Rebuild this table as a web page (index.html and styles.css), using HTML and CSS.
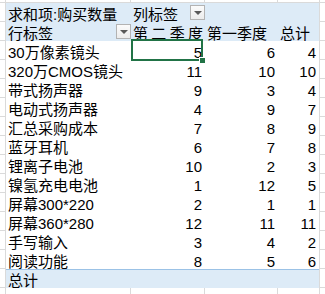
FILE: index.html
```html
<!DOCTYPE html>
<html lang="zh">
<head>
<meta charset="utf-8">
<title>数据透视表</title>
<link rel="stylesheet" href="styles.css">
</head>
<body>
<div class="sheet">
  <div class="pivot">
    <div class="cell hdr">求和项:购买数量</div>
    <div class="cell hdr with-btn">列标签<span class="dd"></span></div>
    <div class="cell hdr"></div>
    <div class="cell hdr"></div>

    <div class="cell hdr with-btn">行标签<span class="dd"></span></div>
    <div class="cell hdr spread">第二季度</div>
    <div class="cell hdr">第一季度</div>
    <div class="cell hdr">总计</div>

    <div class="cell lbl">30万像素镜头</div><div class="cell num">5</div><div class="cell num">6</div><div class="cell num">4</div>
    <div class="cell lbl">320万CMOS镜头</div><div class="cell num">11</div><div class="cell num">10</div><div class="cell num">10</div>
    <div class="cell lbl">带式扬声器</div><div class="cell num">9</div><div class="cell num">3</div><div class="cell num">4</div>
    <div class="cell lbl">电动式扬声器</div><div class="cell num">4</div><div class="cell num">9</div><div class="cell num">7</div>
    <div class="cell lbl">汇总采购成本</div><div class="cell num">7</div><div class="cell num">8</div><div class="cell num">9</div>
    <div class="cell lbl">蓝牙耳机</div><div class="cell num">6</div><div class="cell num">7</div><div class="cell num">8</div>
    <div class="cell lbl">锂离子电池</div><div class="cell num">10</div><div class="cell num">2</div><div class="cell num">3</div>
    <div class="cell lbl">镍氢充电电池</div><div class="cell num">1</div><div class="cell num">12</div><div class="cell num">5</div>
    <div class="cell lbl">屏幕300*220</div><div class="cell num">2</div><div class="cell num">1</div><div class="cell num">1</div>
    <div class="cell lbl">屏幕360*280</div><div class="cell num">12</div><div class="cell num">11</div><div class="cell num">11</div>
    <div class="cell lbl">手写输入</div><div class="cell num">3</div><div class="cell num">4</div><div class="cell num">2</div>
    <div class="cell lbl">阅读功能</div><div class="cell num">8</div><div class="cell num">5</div><div class="cell num">6</div>

    <div class="cell tot">总计</div><div class="cell tot"></div><div class="cell tot"></div><div class="cell tot"></div>

    <div class="sel"><span class="handle"></span></div>
  </div>
</div>
</body>
</html>
```

FILE: styles.css
```css
html, body {
  margin: 0;
  padding: 0;
}

body {
  width: 325px;
  height: 294px;
  overflow: hidden;
  background-color: #ffffff;
  background-image:
    linear-gradient(#dadada, #dadada),
    linear-gradient(#dadada, #dadada),
    linear-gradient(#dadada, #dadada),
    linear-gradient(#dadada, #dadada),
    linear-gradient(#dadada, #dadada),
    repeating-linear-gradient(to bottom, #dadada 0 1px, transparent 1px 19px);
  background-size: 1px 100%, 1px 100%, 1px 100%, 1px 100%, 1px 100%, 100% 100%;
  background-position: 5px 0, 130px 0, 204px 0, 277px 0, 319px 0, 0 2px;
  background-repeat: no-repeat, no-repeat, no-repeat, no-repeat, no-repeat, repeat;
  font-family: "Liberation Sans", "Noto Sans CJK SC", sans-serif;
  font-size: 15px;
  color: #000;
}

.sheet {
  padding: 3px 0 0 6px;
}

.pivot {
  position: relative;
  width: 313px;
  display: grid;
  grid-template-columns: 125px 74px 73px 41px;
  grid-auto-rows: 19px;
  background: #ffffff;
}

.cell {
  line-height: 17px;
  height: 19px;
  white-space: nowrap;
  padding: 3px 2px 0;
  box-sizing: border-box;
}

.hdr {
  background: #ddebf7;
}

.spread {
  white-space: normal;
  text-align: justify;
  text-align-last: justify;
  text-justify: inter-character;
  padding-right: 2px;
}

.with-btn {
  position: relative;
}

.dd {
  position: absolute;
  right: 0;
  bottom: 2px;
  width: 13px;
  height: 13px;
  border: 1px solid #b3b3b3;
  background: linear-gradient(#fbfbfb, #ececec);
}

.dd::after {
  content: "";
  position: absolute;
  left: 3px;
  top: 5px;
  border-left: 4px solid transparent;
  border-right: 4px solid transparent;
  border-top: 4px solid #595959;
}

.lbl {
  text-align: left;
}

.num {
  text-align: right;
  padding-right: 3px;
}

.tot {
  background: #ddebf7;
  border-top: 1px solid #9bc2e6;
  padding-top: 2px;
}

.sel {
  position: absolute;
  left: 125px;
  top: 36px;
  width: 72px;
  height: 22px;
  border: 2px solid #217346;
  box-sizing: border-box;
}

.handle {
  position: absolute;
  right: -5px;
  bottom: -5px;
  width: 5px;
  height: 5px;
  background: #217346;
  border: 1px solid #ffffff;
}
```
